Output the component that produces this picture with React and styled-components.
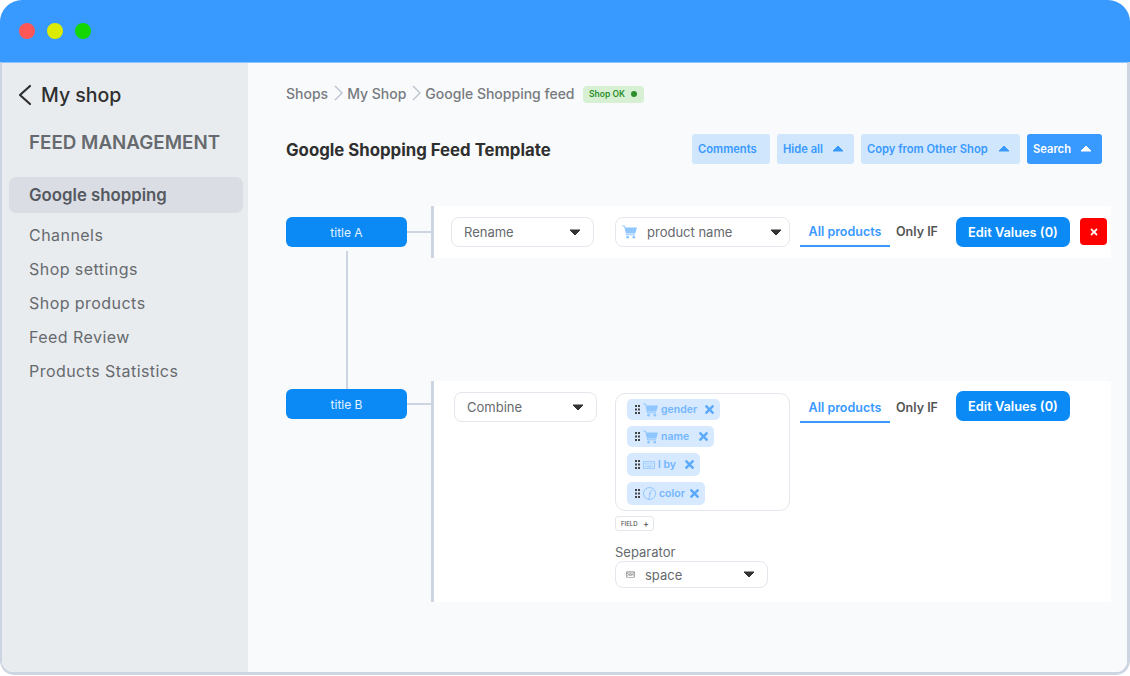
import React from 'react';
import styled, { createGlobalStyle } from 'styled-components';
import { FaTimes, FaRegKeyboard } from 'react-icons/fa';

const COLORS = {
  blue: '#3899ff',
  deepBlue: '#0b8af5',
  paleBlue: '#d0e6fd',
  chip: '#d6e9fe',
  cart: '#8fc6ff',
  chipText: '#74b6fd',
  line: '#ccd5e1',
  side: '#e9ecef',
  page: '#f9fafc',
  text: '#2f2f2f',
  grey: '#666a6e',
};

const GlobalStyle = createGlobalStyle`
  html, body { margin: 0; padding: 0; background: #fff; }
  body { font-family: Inter, "Noto Sans", sans-serif; }
  * { box-sizing: border-box; }
`;

const Frame = styled.div`
  width: 1130px;
  height: 675px;
  display: flex;
  flex-direction: column;
  border-radius: 22px 22px 14px 14px;
  overflow: hidden;
`;

const TitleBar = styled.header`
  height: 62px;
  flex: none;
  display: flex;
  align-items: center;
  gap: 12px;
  padding: 0 0 0 19px;
  background: ${COLORS.blue};
`;

const Light = styled.span`
  width: 16px;
  height: 16px;
  border-radius: 50%;
  background: ${p => p.$color};
`;

const Body = styled.div`
  flex: 1;
  display: flex;
  min-height: 0;
  border: 3px solid ${COLORS.line};
  border-left-width: 2px;
  border-top: 1px solid #8cc4ff;
  border-radius: 0 0 14px 14px;
  overflow: hidden;
`;

const Sidebar = styled.aside`
  width: 246px;
  flex: none;
  background: ${COLORS.side};
  padding: 18px 5px 0 7px;
`;

const BackLink = styled.div`
  display: flex;
  align-items: center;
  gap: 9px;
  height: 28px;
  padding-left: 9px;
  font-size: 19.5px;
  font-weight: 500;
  color: ${COLORS.text};
`;

const SideHeading = styled.h2`
  margin: 20px 0 0 20px;
  font-size: 18.8px;
  line-height: 28px;
  font-weight: 600;
  color: ${COLORS.grey};
`;

const ActiveItem = styled.div`
  margin-top: 20px;
  height: 36px;
  display: flex;
  align-items: center;
  padding-left: 20px;
  border-radius: 7px;
  background: #dadee4;
  font-size: 16.8px;
  font-weight: 600;
  color: #55595f;
`;

const SideList = styled.nav`
  margin-top: 5px;
  display: flex;
  flex-direction: column;
`;

const SideItem = styled.a`
  height: 34px;
  display: flex;
  align-items: center;
  padding-left: 20px;
  font-size: 16px;
  letter-spacing: 0.45px;
  color: ${COLORS.grey};
`;

const Main = styled.main`
  flex: 1;
  min-width: 0;
  background: ${COLORS.page};
  padding: 19px 16px 0 38px;
`;

const Crumbs = styled.div`
  height: 22px;
  display: flex;
  align-items: center;
  gap: 4.5px;
  font-size: 14px;
  font-weight: 500;
  color: #777b80;
`;

const StatusBadge = styled.span`
  margin: 2px 0 0 4px;
  height: 17px;
  display: flex;
  align-items: center;
  gap: 6px;
  padding: 0 7px 0 6px;
  border-radius: 4px;
  background: #d7f0d4;
  font-size: 8.5px;
  font-weight: 600;
  color: #2c8f2c;
  &::after {
    content: '';
    width: 6px;
    height: 6px;
    border-radius: 50%;
    background: #2c8f2c;
  }
`;

const TitleRow = styled.div`
  margin-top: 30px;
  height: 30px;
  display: flex;
  align-items: center;
  justify-content: space-between;
  padding-right: 9px;
`;

const PageTitle = styled.h1`
  margin: 2px 0 0;
  font-size: 16.8px;
  font-weight: 700;
  color: ${COLORS.text};
`;

const Actions = styled.div`
  display: flex;
  gap: 7px;
`;

const ActionButton = styled.button`
  height: 30px;
  width: ${p => p.$width}px;
  display: flex;
  align-items: center;
  justify-content: space-between;
  padding: 0 10px 1px 6px;
  border: 0;
  border-radius: 3px;
  background: ${p => (p.$solid ? COLORS.blue : COLORS.paleBlue)};
  color: ${p => (p.$solid ? '#fff' : COLORS.blue)};
  font: 600 11.2px Inter, sans-serif;
`;

const Rows = styled.div`
  margin-top: 42px;
  display: flex;
  flex-direction: column;
  gap: 123px;
`;

const FeedRow = styled.section`
  display: flex;
  align-items: flex-start;
`;

const NodeColumn = styled.div`
  width: 121px;
  flex: none;
  padding-top: ${p => p.$top}px;
`;

const Node = styled.div`
  position: relative;
  height: 30px;
  display: flex;
  align-items: center;
  justify-content: center;
  border-radius: 6px;
  background: ${COLORS.deepBlue};
  font-size: 12px;
  color: #e4f2ff;
  /* stub to the panel */
  &::after {
    content: '';
    position: absolute;
    left: 100%;
    top: 14px;
    width: 24px;
    height: 2px;
    background: ${COLORS.line};
  }
  /* link down to the next node */
  ${p => p.$linked && `
    &::before {
      content: '';
      position: absolute;
      left: 60px;
      top: 34px;
      width: 2px;
      height: 139px;
      background: ${COLORS.line};
    }
  `}
`;

const Panel = styled.div`
  margin-left: 24px;
  width: 680px;
  min-height: ${p => p.$height}px;
  display: flex;
  align-items: flex-start;
  padding: ${p => p.$pad};
  background: #fff;
  border-left: 3px solid ${COLORS.line};
`;

const Select = styled.div`
  width: ${p => p.$width}px;
  height: ${p => p.$height || 30}px;
  flex: none;
  display: flex;
  align-items: center;
  gap: ${p => p.$gap || 0}px;
  padding: 0 ${p => p.$right || 12}px 0 ${p => p.$left || 12}px;
  margin-right: ${p => p.$after || 0}px;
  border: 1px solid #e3e6ec;
  border-radius: 8px;
  background: #fff;
  font-size: 13px;
  color: ${COLORS.grey};
`;

const SelectText = styled.span`
  flex: 1;
`;

const Tabs = styled.div`
  display: flex;
  align-items: center;
  margin-top: ${p => p.$top || 0}px;
  margin-left: 10px;
`;

const Tab = styled.span`
  height: 30px;
  display: flex;
  align-items: center;
  justify-content: center;
  width: ${p => p.$width}px;
  font-size: 12.5px;
  font-weight: 600;
  color: ${p => (p.$active ? COLORS.blue : '#555')};
  border-bottom: 2px solid ${p => (p.$active ? COLORS.blue : 'transparent')};
`;

const EditButton = styled.button`
  width: 114px;
  height: 30px;
  margin-left: 12px;
  margin-top: ${p => p.$top || 0}px;
  flex: none;
  border: 0;
  border-radius: 7px;
  background: ${COLORS.deepBlue};
  color: #fff;
  font: 600 12.8px Inter, sans-serif;
`;

const RemoveButton = styled.button`
  width: 27px;
  height: 27px;
  margin: 1px 0 0 10px;
  flex: none;
  display: flex;
  align-items: center;
  justify-content: center;
  padding: 0;
  border: 0;
  border-radius: 4px;
  background: #ff0000;
  color: #fff;
  font-size: 10px;
`;

const FieldColumn = styled.div`
  width: 175px;
  flex: none;
  margin-left: 18px;
  padding-top: 1px;
  display: flex;
  flex-direction: column;
  align-items: flex-start;
`;

const ChipBox = styled.div`
  width: 175px;
  height: 118px;
  padding: 5px 0 0 11px;
  display: flex;
  flex-direction: column;
  align-items: flex-start;
  gap: 6px;
  border: 1px solid #e3e6ec;
  border-radius: 10px;
`;

const Chip = styled.div`
  width: ${p => p.$width}px;
  height: ${p => p.$height}px;
  display: flex;
  align-items: center;
  gap: 3px;
  padding-left: 8px;
  border-radius: 5px;
  background: ${COLORS.chip};
  font-size: 10.5px;
  font-weight: 600;
  color: ${COLORS.chipText};
`;

const ChipText = styled.span`
  flex: 1;
`;

const ChipClose = styled(FaTimes)`
  margin-right: 4px;
  color: #5aa9fb;
  font-size: 13px;
`;

const FieldButton = styled.button`
  margin-top: 5px;
  width: 39px;
  height: 15px;
  display: flex;
  align-items: center;
  justify-content: space-between;
  padding: 0 4px 0 5px;
  border: 1px solid #e3e6ec;
  border-radius: 3px;
  background: #fff;
  font: 500 6px Inter, sans-serif;
  color: #555;
`;

const FieldPlus = styled.span`
  font-size: 9px;
  color: #555;
`;

const SeparatorLabel = styled.label`
  margin-top: 13px;
  line-height: 17px;
  font-size: 13px;
  color: ${COLORS.grey};
`;

const FnIcon = styled.span`
  width: 13px;
  height: 13px;
  flex: none;
  display: flex;
  align-items: center;
  justify-content: center;
  border: 1px solid ${COLORS.cart};
  border-radius: 50%;
  font: italic 11px "Liberation Serif", serif;
  color: ${COLORS.cart};
`;

const Caret = ({ up, color = '#333' }) => (
  <svg width="12" height="7" viewBox="0 0 12 7" aria-hidden="true">
    <path
      d={up ? 'M6 1 L11 6 H1 Z' : 'M1 1 H11 L6 6 Z'}
      fill={color}
      stroke={color}
      strokeWidth="1"
      strokeLinejoin="round"
    />
  </svg>
);

const Chevron = () => (
  <svg width="10" height="20" viewBox="0 0 10 20" fill="none" stroke="#b9c3cf" strokeWidth="1.4" aria-hidden="true">
    <path d="M2 3 L9 10 L2 17" />
  </svg>
);

const BackIcon = () => (
  <svg width="14" height="22" viewBox="0 0 14 22" fill="none" stroke="#2f2f2f" strokeWidth="2.2" strokeLinecap="round" strokeLinejoin="round" aria-hidden="true">
    <path d="M12 2 L2 11 L12 20" />
  </svg>
);

const CartIcon = () => (
  <svg width="15" height="14" viewBox="0 0 15 14" fill={COLORS.cart} aria-hidden="true">
    <path d="M0.3 1 H2.6 L4.6 9.8 H13" fill="none" stroke={COLORS.cart} strokeWidth="1" />
    <path d="M3.2 2.4 H15 L13.3 8.6 H4.6 Z" />
    <circle cx="5.6" cy="12.2" r="1.4" />
    <circle cx="11.8" cy="12.2" r="1.4" />
  </svg>
);

const Grip = () => (
  <svg width="5" height="9" viewBox="0 0 5 9" fill="#444" aria-hidden="true">
    {[0, 3.5, 7].map(y => (
      <g key={y}>
        <rect x="0" y={y} width="2" height="2" />
        <rect x="3" y={y} width="2" height="2" />
      </g>
    ))}
  </svg>
);

const CHIPS = [
  { label: 'gender', width: 93, height: 21, icon: 'cart' },
  { label: 'name', width: 87, height: 21, icon: 'cart' },
  { label: 'l by', width: 73, height: 23, icon: 'keyboard' },
  { label: 'color', width: 78, height: 23, icon: 'fn' },
];

const ChipIcon = ({ type }) => {
  if (type === 'cart') return <CartIcon />;
  if (type === 'keyboard') return <FaRegKeyboard size={12} color={COLORS.cart} />;
  return <FnIcon>f</FnIcon>;
};

const ShopTabs = ({ top }) => (
  <Tabs $top={top}>
    <Tab $active $width={90}>All products</Tab>
    <Tab $width={54}>Only IF</Tab>
  </Tabs>
);

export default function App() {
  return (
    <Frame>
      <GlobalStyle />
      <TitleBar>
        <Light $color="#ff5757" />
        <Light $color="#dcec00" />
        <Light $color="#14d600" />
      </TitleBar>
      <Body>
        <Sidebar>
          <BackLink>
            <BackIcon />
            My shop
          </BackLink>
          <SideHeading>FEED MANAGEMENT</SideHeading>
          <ActiveItem>Google shopping</ActiveItem>
          <SideList>
            <SideItem>Channels</SideItem>
            <SideItem>Shop settings</SideItem>
            <SideItem>Shop products</SideItem>
            <SideItem>Feed Review</SideItem>
            <SideItem>Products Statistics</SideItem>
          </SideList>
        </Sidebar>
        <Main>
          <Crumbs>
            Shops <Chevron /> My Shop <Chevron /> Google Shopping feed
            <StatusBadge>Shop OK</StatusBadge>
          </Crumbs>
          <TitleRow>
            <PageTitle>Google Shopping Feed Template</PageTitle>
            <Actions>
              <ActionButton $width={78}>Comments</ActionButton>
              <ActionButton $width={77}>Hide all <Caret up color={COLORS.blue} /></ActionButton>
              <ActionButton $width={159}>Copy from Other Shop <Caret up color={COLORS.blue} /></ActionButton>
              <ActionButton $width={75} $solid>Search <Caret up color="#fff" /></ActionButton>
            </Actions>
          </TitleRow>
          <Rows>
            <FeedRow>
              <NodeColumn $top={11}>
                <Node $linked>title A</Node>
              </NodeColumn>
              <Panel $height={52} $pad="11px 0 0 17px">
                <Select $width={143} $after={21}>
                  <SelectText>Rename</SelectText>
                  <Caret />
                </Select>
                <Select $width={175} $left={6} $right={7} $gap={10}>
                  <CartIcon />
                  <SelectText>product name</SelectText>
                  <Caret />
                </Select>
                <ShopTabs />
                <EditButton>Edit Values (0)</EditButton>
                <RemoveButton><FaTimes /></RemoveButton>
              </Panel>
            </FeedRow>
            <FeedRow>
              <NodeColumn $top={8}>
                <Node>title B</Node>
              </NodeColumn>
              <Panel $height={221} $pad="11px 0 0 20px">
                <Select $width={143}>
                  <SelectText>Combine</SelectText>
                  <Caret />
                </Select>
                <FieldColumn>
                  <ChipBox>
                    {CHIPS.map(chip => (
                      <Chip key={chip.label} $width={chip.width} $height={chip.height}>
                        <Grip />
                        <ChipIcon type={chip.icon} />
                        <ChipText>{chip.label}</ChipText>
                        <ChipClose />
                      </Chip>
                    ))}
                  </ChipBox>
                  <FieldButton>FIELD <FieldPlus>+</FieldPlus></FieldButton>
                  <SeparatorLabel>Separator</SeparatorLabel>
                  <Select $width={153} $height={27} $left={10} $gap={10}>
                    <FaRegKeyboard size={9} color="#777" />
                    <SelectText>space</SelectText>
                    <Caret />
                  </Select>
                </FieldColumn>
                <ShopTabs top={1} />
                <EditButton $top={-1}>Edit Values (0)</EditButton>
              </Panel>
            </FeedRow>
          </Rows>
        </Main>
      </Body>
    </Frame>
  );
}
